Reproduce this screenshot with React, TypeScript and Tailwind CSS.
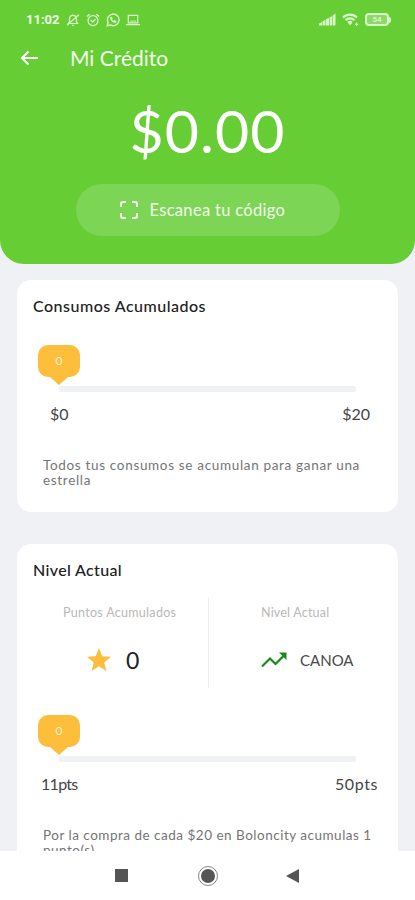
import React from 'react';

const StatusBar = () => (
    <div className="flex h-5 items-center pl-[26px] pr-[24px] pt-px text-[#d9f4cb]">
        <span className="w-[35px] whitespace-nowrap font-['Roboto'] text-[13px] font-bold leading-none text-[#effbe8]">11:02</span>
        <div className="ml-[5px] flex items-center gap-[6px]">
            <svg className="h-[14px] w-[14px]" viewBox="0 0 24 24" fill="none" stroke="currentColor" strokeWidth="2">
                <path d="M4 18h16l-2-3v-5a6 6 0 0 0-12 0v5zM10 21h4M12 5V2M2 21 22 3" />
            </svg>
            <svg className="h-[14px] w-[14px]" viewBox="0 0 24 24" fill="none" stroke="currentColor" strokeWidth="2.2">
                <circle cx="12" cy="13" r="8.5" />
                <path d="m1.5 6 5-4M22.5 6l-5-4M8 12l3.5 3.5 5-5" />
            </svg>
            <svg className="h-[14px] w-[14px]" viewBox="0 0 24 24" fill="none" stroke="currentColor" strokeWidth="2.4">
                <path d="m2 22 1.6-5.5A10 10 0 1 1 7.5 20.5z" />
                <path d="M8 7c-2 4 4 11 9 9l.5-2-3-1.5-1.5 1.5L10 11l1-1.5L9.5 7z" fill="currentColor" strokeWidth="1" />
            </svg>
            <svg className="h-[14px] w-[14px]" viewBox="0 0 24 24" fill="none" stroke="currentColor" strokeWidth="2.2">
                <path d="M4 4h16v13H4zM0 20h24" />
                <path d="M7 14h10" strokeWidth="1.5" />
            </svg>
        </div>
        <div className="ml-auto flex items-center gap-[6px]">
            <svg className="h-[13px] w-[17px]" viewBox="0 0 17 13" fill="currentColor">
                <path d="M0 10.5 3 9v3.5H0zM3.6 8.3l2.9-1.500v5.700H3.600zM7.100 6.200 10 4.800v7.700H7.100zM10.600 4.200l2.600-1.200v9.500h-2.600zM13.800 2.300 16.500.5v12h-2.700z" />
            </svg>
            <svg className="h-[14px] w-[17px]" viewBox="0 0 17 14" fill="none" stroke="currentColor" strokeWidth="2.2">
                <path d="M1 4.5a10 10 0 0 1 14 0M3.5 7.200a6.400 6.400 0 0 1 9 0M6 9.700a3 3 0 0 1 4 0" />
                <path d="M8 12.500 6.300 10h3.400z" fill="currentColor" stroke="none" />
                <path d="M14.500 9.500v3.500M13 11.300h3.300" strokeWidth="1.200" />
            </svg>
            <div className="flex items-center">
                <div className="flex h-[13px] w-6 items-center justify-center rounded-[4px] border-2 border-current bg-white/25 font-['Roboto'] text-[8px] font-bold leading-none">
                    54
                </div>
                <div className="h-[6px] w-[2px] rounded-r bg-current" />
            </div>
        </div>
    </div>
);

const ProgressBlock = ({ children }: { children: React.ReactNode }) => (
    <div>
        <div className="ml-[21px] flex w-[42px] flex-col items-center">
            <div className="flex h-8 w-full items-center justify-center rounded-[10px] bg-[#fdbe3b] text-[12px] leading-none text-[#fff3d6]">
                0
            </div>
            <svg className="h-2 w-[18px]" viewBox="0 0 18 8" fill="#fdbe3b">
                <path d="M0 0h18L9 8z" />
            </svg>
        </div>
        <div className="ml-[42px] mr-[42px] mt-px h-[6px] rounded-[2px] bg-[#f0f1f5]" />
        {children}
    </div>
);

const NavBar = () => (
    <nav className="flex h-[49px] shrink-0 items-center bg-white pl-[115px] text-[#555555]">
        <div className="h-[13px] w-[13px] bg-current" />
        <div className="ml-[70px] flex h-5 w-5 items-center justify-center rounded-full border-[1.5px] border-[#858585]">
            <div className="h-[14px] w-[14px] rounded-full bg-current" />
        </div>
        <svg className="ml-[68px] h-[14px] w-[13px]" viewBox="0 0 13 14" fill="currentColor">
            <path d="M13 0v14L0 7z" />
        </svg>
    </nav>
);

export default function App() {
    return (
        <div className="flex h-[900px] w-[415px] flex-col overflow-hidden bg-[#eff1f5] font-['Lato',sans-serif]">
            <header className="h-[264px] shrink-0 rounded-b-[24px] bg-[#66cd35] pt-[9px] text-white">
                <StatusBar />
                <div className="mt-[17px] flex h-6 items-center pl-[20px]">
                    <svg className="h-[18px] w-[19px]" viewBox="0 0 19 18" fill="none" stroke="currentColor" strokeWidth="2">
                        <path d="M18 9H2M8.500 2.500 2 9l6.500 6.500" />
                    </svg>
                    <h1 className="ml-[31px] whitespace-nowrap text-[21px] leading-6 text-[#f3fced]">Mi Crédito</h1>
                </div>
                <div className="mt-[26px] text-center text-[59px] leading-[70px] tracking-[1px]">$0.00</div>
                <button className="mx-auto mt-[18px] flex h-[52px] w-[264px] items-center rounded-full bg-[#7dd556] pl-[44px] text-[#f3fced]">
                    <svg className="h-[18px] w-[18px]" viewBox="0 0 18 18" fill="none" stroke="currentColor" strokeWidth="2">
                        <path d="M1 6V3a2 2 0 0 1 2-2h3M12 1h3a2 2 0 0 1 2 2v3M17 12v3a2 2 0 0 1-2 2h-3M6 17H3a2 2 0 0 1-2-2v-3" />
                    </svg>
                    <span className="ml-3 whitespace-nowrap text-[16.5px] leading-5 tracking-[0.31px]">Escanea tu código</span>
                </button>
            </header>

            <main className="min-h-0 flex-1 overflow-hidden px-[17px] pt-4">
                <section className="h-[232px] rounded-[14px] bg-white pt-4">
                    <h2 className="ml-4 whitespace-nowrap text-[16px] font-medium leading-5 tracking-[0.5px] text-[#202020]">Consumos Acumulados</h2>
                    <div className="mt-[29px]">
                        <ProgressBlock>
                            <div className="mt-[12px] flex justify-between pl-[33px] pr-[28px] text-[16px] leading-5 text-[#444444]">
                                <span>$0</span>
                                <span>$20</span>
                            </div>
                            <p className="ml-[26px] mt-[34px] whitespace-nowrap text-[13.5px] leading-[15px] tracking-[0.67px] text-[#757575]">
                                Todos tus consumos se acumulan para ganar una
                                <br />
                                estrella
                            </p>
                        </ProgressBlock>
                    </div>
                </section>

                <section className="mt-8 h-[380px] rounded-[14px] bg-white pt-4">
                    <h2 className="ml-4 whitespace-nowrap text-[16px] font-medium leading-5 tracking-[0.35px] text-[#202020]">Nivel Actual</h2>
                    <div className="mt-[18px] flex h-[90px]">
                        <div className="w-[192px] border-r border-[#eeeeee] pl-[46px] pt-[7px]">
                            <div className="whitespace-nowrap text-[12.5px] leading-4 tracking-[0.3px] text-[#b8b8b8]">Puntos Acumulados</div>
                            <div className="mt-[26px] flex h-[26px] items-center pl-6">
                                <svg className="h-6 w-6" viewBox="0 0 24 24" fill="#fdbe3b">
                                    <path d="m12 0 3.2 8.2 8.8.6-6.8 5.700 2.200 8.500-7.400-4.700L4.600 23l2.200-8.500L0 8.800l8.800-.6z" />
                                </svg>
                                <span className="ml-[15px] text-[23px] leading-6 text-[#222222]">0</span>
                            </div>
                        </div>
                        <div className="flex-1 pl-[52px] pt-[7px]">
                            <div className="whitespace-nowrap text-[12.5px] leading-4 tracking-[0.2px] text-[#b8b8b8]">Nivel Actual</div>
                            <div className="mt-[26px] flex h-[26px] items-center">
                                <svg className="h-4 w-[26px]" viewBox="0 0 26 16" fill="none" stroke="#168a1a" strokeWidth="2.2">
                                    <path d="m1 14.5 8-8 5.5 5.5L24 2.5" />
                                    <path d="M18 .5h7.5V8z" fill="#168a1a" stroke="none" />
                                </svg>
                                <span className="ml-[13px] text-[15px] leading-5 text-[#484848]">CANOA</span>
                            </div>
                        </div>
                    </div>
                    <div className="mt-[27px]">
                        <ProgressBlock>
                            <div className="mt-[12px] flex justify-between pl-[24px] pr-[20px] text-[16px] leading-5 text-[#444444]">
                                <span className="tracking-[-0.7px]">11pts</span>
                                <span className="tracking-[0.6px]">50pts</span>
                            </div>
                            <p className="ml-[26px] mt-[34px] whitespace-nowrap text-[13.5px] leading-[15px] tracking-[0.5px] text-[#757575]">
                                Por la compra de cada $20 en Boloncity acumulas 1
                                <br />
                                punto(s)
                            </p>
                        </ProgressBlock>
                    </div>
                </section>
            </main>
            <NavBar />
        </div>
    );
}
